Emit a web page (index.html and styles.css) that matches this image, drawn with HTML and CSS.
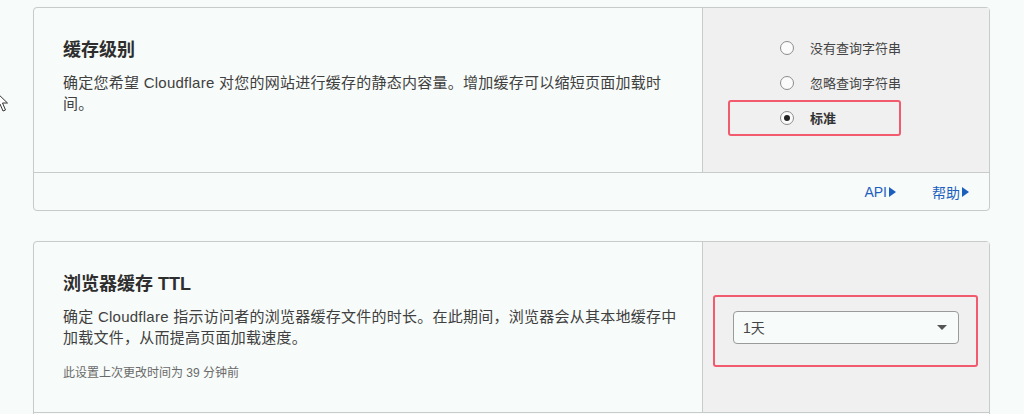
FILE: index.html
```html
<!DOCTYPE html>
<html lang="zh-CN">
<head>
<meta charset="utf-8">
<title>缓存设置</title>
<link rel="stylesheet" href="styles.css">
</head>
<body>
<svg class="cursor" width="14" height="22" viewBox="0 0 14 22"><path d="M1 1 L1 17 L5 13 L8 20 L10.5 19 L7.5 12 L12.5 12 Z" fill="#fff" stroke="#333" stroke-width="1"/></svg>
<div class="page">
  <section class="card">
    <div class="card-row">
      <div class="card-main">
        <h3 class="card-title">缓存级别</h3>
        <p class="card-desc">确定您希望 Cloudflare 对您的网站进行缓存的静态内容量。增加缓存可以缩短页面加载时间。</p>
      </div>
      <div class="card-side side-radios">
        <div class="radio-list">
          <label class="radio-item"><span class="radio"></span><span class="radio-label">没有查询字符串</span></label>
          <label class="radio-item"><span class="radio"></span><span class="radio-label">忽略查询字符串</span></label>
          <label class="radio-item"><span class="radio checked"></span><span class="radio-label strong">标准</span></label>
        </div>
        <div class="highlight hl-radio"></div>
      </div>
    </div>
    <div class="card-footer">
      <a class="footer-link">API<span class="tri"></span></a>
      <a class="footer-link">帮助<span class="tri"></span></a>
    </div>
  </section>

  <section class="card">
    <div class="card-row">
      <div class="card-main">
        <h3 class="card-title">浏览器缓存 TTL</h3>
        <p class="card-desc card-desc-wide">确定 Cloudflare 指示访问者的浏览器缓存文件的时长。在此期间，浏览器会从其本地缓存中加载文件，从而提高页面加载速度。</p>
        <p class="card-meta">此设置上次更改时间为 39 分钟前</p>
      </div>
      <div class="card-side side-select">
        <div class="select">
          <span class="select-value">1天</span>
          <span class="caret"></span>
        </div>
        <div class="highlight hl-select"></div>
      </div>
    </div>
    <div class="card-footer"></div>
  </section>
</div>
</body>
</html>
```

FILE: styles.css
```css
* { box-sizing: border-box; }

html, body {
  margin: 0;
  padding: 0;
  background: #f7fbf9;
  font-family: "Liberation Sans", "Noto Sans CJK SC", sans-serif;
  color: #333;
  overflow: hidden;
}

.cursor {
  position: absolute;
  left: -5px;
  top: 91px;
}

.page {
  padding: 7px 34px 0 33px;
  display: flex;
  flex-direction: column;
  gap: 30px;
}

.card {
  border: 1px solid #c9cbca;
  border-radius: 4px;
  background: #f7fbf9;
  box-shadow: 0 0 1px rgba(0,0,0,0.05);
}

.card-row {
  display: flex;
  min-height: 164px;
}

.card-main {
  flex: 1;
  padding: 30px 34px 30px 29px;
}

.card-title {
  margin: 0;
  font-size: 18px;
  line-height: 24px;
  font-weight: bold;
  color: #2e2e2e;
}

.card-desc {
  margin: 10px 0 0;
  font-size: 15px;
  line-height: 21px;
  letter-spacing: 0.25px;
  color: #404040;
}

.card-desc-wide {
  margin-right: -18px;
}

.card-meta {
  margin: 16px 0 0;
  font-size: 12px;
  line-height: 18px;
  color: #6a6a6a;
}

.card-side {
  position: relative;
  width: 287px;
  flex: none;
  border-left: 1px solid #c9cbca;
  background: #f0f0f0;
}

.side-radios {
  padding: 22px 0 0 77px;
}

.radio-list {
  display: flex;
  flex-direction: column;
}

.radio-item {
  display: flex;
  align-items: center;
  height: 35px;
  gap: 16px;
}

.radio {
  width: 14px;
  height: 14px;
  border-radius: 50%;
  border: 1px solid #8c8c8c;
  background: #fbfbfb;
  display: flex;
  align-items: center;
  justify-content: center;
}

.radio.checked::after {
  content: "";
  width: 6px;
  height: 6px;
  border-radius: 50%;
  background: #222;
}

.radio-label {
  font-size: 13px;
  color: #444;
}

.radio-label.strong {
  font-weight: bold;
  color: #333;
}

.highlight {
  position: absolute;
  border: 2px solid #f25a6e;
  border-radius: 3px;
}

.hl-radio {
  left: 25px;
  top: 92px;
  width: 173px;
  height: 36px;
}

.side-select {
  display: flex;
  align-items: center;
  padding: 0 30px;
}

.select {
  flex: 1;
  height: 33px;
  border: 1px solid #9a9a9a;
  border-radius: 4px;
  background: #f7fbf9;
  display: flex;
  align-items: center;
  justify-content: space-between;
  padding: 0 11px 0 9px;
}

.select-value {
  font-size: 14px;
  color: #444;
}

.caret {
  width: 0;
  height: 0;
  border-left: 5px solid transparent;
  border-right: 5px solid transparent;
  border-top: 5px solid #555;
}

.hl-select {
  left: 10px;
  top: 53px;
  width: 265px;
  height: 72px;
}

.card-footer {
  border-top: 1px solid #c9cbca;
  height: 38px;
  display: flex;
  justify-content: flex-end;
  align-items: center;
  gap: 36px;
  padding-right: 20px;
}

.footer-link {
  font-size: 14px;
  color: #1d5fbf;
  text-decoration: none;
  display: flex;
  align-items: center;
}

.tri {
  margin-left: 2px;
  width: 0;
  height: 0;
  border-top: 5px solid transparent;
  border-bottom: 5px solid transparent;
  border-left: 7px solid #1d5fbf;
}
```
